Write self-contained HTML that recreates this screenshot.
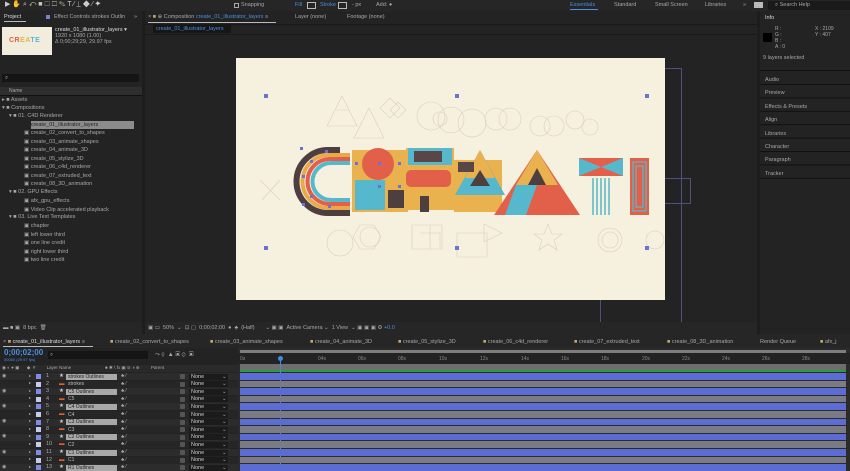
<!DOCTYPE html>
<html><head><style>
*{margin:0;padding:0;box-sizing:border-box}
body{width:850px;height:471px;background:#1d1d1d;font-family:"Liberation Sans",sans-serif;font-size:5.5px;color:#a8a8a8;position:relative;overflow:hidden}
div,span{position:absolute;white-space:nowrap}
.t{line-height:8px}
</style></head><body>
<div style="left:0;top:0;width:850px;height:11px;background:#262626"></div>
<div class="t" style="left:5px;top:1px;color:#ccc;font-size:7px">▶ ✋ ⌕ ↶ ■ ⬚ ☐ ✎ T ⁄ ⊥ ◆ ⁄ ✦</div>
<div style="left:234px;top:3px;width:5px;height:5px;border:1px solid #aaa"></div>
<div class="t" style="left:241px;top:1px">Snapping</div>
<div class="t" style="left:295px;top:1px;color:#4a8fe0">Fill</div>
<div style="left:307px;top:2px;width:9px;height:7px;border:1px solid #bbb"></div>
<div class="t" style="left:320px;top:1px;color:#4a8fe0">Stroke</div>
<div style="left:338px;top:2px;width:9px;height:7px;border:1px solid #bbb"></div>
<div class="t" style="left:352px;top:1px">- px</div>
<div class="t" style="left:376px;top:1px">Add: ●</div>
<div class="t" style="left:570px;top:1px;color:#4a8fe0">Essentials</div>
<div style="left:570px;top:9px;width:28px;height:1px;background:#4a8fe0"></div>
<div class="t" style="left:614px;top:1px">Standard</div>
<div class="t" style="left:655px;top:1px">Small Screen</div>
<div class="t" style="left:705px;top:1px">Libraries</div>
<div class="t" style="left:743px;top:1px">»</div>
<div style="left:754px;top:2px;width:9px;height:6px;background:#bbb"></div>
<div style="left:768px;top:1px;width:82px;height:9px;background:#1a1a1a"></div>
<div class="t" style="left:775px;top:1px">⌕ Search Help</div>

<div style="left:0;top:11px;width:142px;height:311px;background:#232323"></div>
<div class="t" style="left:4px;top:13px;color:#ddd">Project</div>
<div style="left:4px;top:21px;width:22px;height:1px;background:#bbb"></div>
<div style="left:46px;top:15px;width:4px;height:4px;background:#7a80d0"></div>
<div class="t" style="left:54px;top:13px">Effect Controls strokes Outlin</div>
<div class="t" style="left:134px;top:13px">»</div>
<div style="left:2px;top:27px;width:50px;height:28px;background:#f2ecdc"></div>
<div class="t" style="left:9px;top:37px;font-size:7px;font-weight:bold;color:#e06045;letter-spacing:0.5px">CR<span style="position:static;color:#e9b24f">EA</span><span style="position:static;color:#55b8cc">TE</span></div>
<div class="t" style="left:55px;top:26px;color:#ddd">create_01_illustrator_layers ▾</div>
<div class="t" style="left:55px;top:32px">1920 x 1080 (1.00)</div>
<div class="t" style="left:55px;top:38px">Δ 0;00;29;29, 29.97 fps</div>
<div style="left:2px;top:74px;width:137px;height:8px;background:#151515"></div>
<div class="t" style="left:5px;top:74px">⌕</div>
<div style="left:0;top:87px;width:142px;height:8px;background:#2e2e2e"></div>
<div class="t" style="left:9px;top:87px;font-size:5px">Name</div>
<div style="left:0;top:95px;width:142px;height:1px;background:#111"></div>
<div class="t" style="left:2px;top:96px">▸ ■ Assets</div>
<div class="t" style="left:2px;top:104px">▾ ■ Compositions</div>
<div class="t" style="left:9px;top:112px">▾ ■ 01. C4D Renderer</div>
<div style="left:31px;top:121px;width:103px;height:8px;background:#8c8c8c"></div>
<div class="t" style="left:24px;top:121px;color:#222">▣ create_01_illustrator_layers</div>
<div class="t" style="left:24px;top:129px;line-height:8.5px">▣ create_02_convert_to_shapes<br>▣ create_03_animate_shapes<br>▣ create_04_animate_3D<br>▣ create_05_stylize_3D<br>▣ create_06_c4d_renderer<br>▣ create_07_extruded_text<br>▣ create_08_3D_animation</div>
<div class="t" style="left:9px;top:188px">▾ ■ 02. GPU Effects</div>
<div class="t" style="left:24px;top:197px;line-height:8.5px">▣ afx_gpu_effects<br>▣ Video Clip accelerated playback</div>
<div class="t" style="left:9px;top:213px">▾ ■ 03. Live Text Templates</div>
<div class="t" style="left:24px;top:222px;line-height:8.5px">▣ chapter<br>▣ left lower third<br>▣ one line credit<br>▣ right lower third<br>▣ two line credit</div>
<div style="left:0;top:322px;width:142px;height:12px;background:#262626"></div>
<div class="t" style="left:3px;top:324px">▬ ■ ▣ &nbsp;8 bpc &nbsp;🗑</div>

<div style="left:145px;top:11px;width:612px;height:311px;background:#232323"></div>
<div class="t" style="left:148px;top:13px">× <span style="position:static;color:#c9a36a">■</span> ⊕ Composition <span style="position:static;color:#4a8fe0">create_01_illustrator_layers</span> ≡</div>
<div style="left:148px;top:22px;width:128px;height:1px;background:#bbb"></div>
<div class="t" style="left:295px;top:13px">Layer (none)</div>
<div class="t" style="left:347px;top:13px">Footage (none)</div>
<div style="left:145px;top:24px;width:612px;height:1px;background:#191919"></div>
<div style="left:153px;top:25px;width:78px;height:8px;background:#161616"></div>
<div class="t" style="left:156px;top:25px;color:#4a8fe0">create_01_illustrator_layers</div>
<div style="left:145px;top:34px;width:612px;height:1px;background:#191919"></div>
<div style="left:600px;top:68px;width:82px;height:256px;border:1px solid #4f4f80"></div>
<div style="left:655px;top:178px;width:36px;height:26px;border:1px solid #4f4f80"></div>
<div style="left:236px;top:58px;width:429px;height:242px;background:#f6f0df"></div>
<svg style="position:absolute;left:0;top:0" width="850" height="471">
<g fill="none" stroke="#d9d0bd" stroke-width="0.6">
<path d="M342 96 L357 126 L327 126Z M336 110 L348 110"/><path d="M369 108 L384 138 L354 138Z"/>
<path d="M380 108 l10 -10 l10 10 l-10 10z M390 110 l8 -8 l8 8 l-8 8z"/>
<circle cx="431" cy="116" r="14"/><circle cx="440" cy="119" r="7"/><circle cx="451" cy="120" r="13"/>
<circle cx="472" cy="123" r="14"/><circle cx="496" cy="119" r="11"/><circle cx="510" cy="119" r="11"/>
<circle cx="540" cy="126" r="10"/><circle cx="554" cy="126" r="10"/><circle cx="575" cy="120" r="9"/><circle cx="590" cy="127" r="8"/>
<path d="M260 180 l20 20 M262 200 l18 -20"/>
<circle cx="340" cy="243" r="13"/><circle cx="370" cy="237" r="10"/><path d="M360 225 l14 0 l7 12 l-7 12 l-14 0 l-7 -12z"/>
<path d="M412 225 h30 v24 h-30z M420 233 h20 v16 M430 225 v24"/><path d="M457 233 h30 v24 h-30z"/>
<path d="M484 224 l18 9 l-18 9z"/><path d="M548 224 l4 10 l10 0 l-8 6 l3 10 l-9 -6 l-9 6 l3 -10 l-8 -6 l10 0z"/>
<circle cx="610" cy="240" r="12"/><circle cx="610" cy="240" r="8"/><circle cx="655" cy="240" r="9"/>
</g>
<g fill="none">
<path d="M340 150 H328 A30 30 0 0 0 328 213 H350" stroke="#4d3f3f" stroke-width="6"/>
<path d="M350 155 H329 A25 25 0 0 0 329 208 H350" stroke="#e9a94a" stroke-width="4"/>
<path d="M350 159 H330 A21 21 0 0 0 330 204 H350" stroke="#e2604a" stroke-width="4"/>
<path d="M350 163 H331 A17 17 0 0 0 331 200 H350" stroke="#55b8cc" stroke-width="4"/>
</g>
<rect x="352" y="150" width="56" height="62" fill="#e9b24f"/>
<circle cx="378" cy="164" r="16" fill="#e2604a"/>
<rect x="355" y="180" width="30" height="30" fill="#55b8cc"/><rect x="388" y="190" width="16" height="18" fill="#4d3f3f"/>
<rect x="406" y="148" width="48" height="62" fill="#e9b24f"/>
<rect x="408" y="148" width="44" height="17" fill="#55b8cc"/><rect x="414" y="151" width="28" height="11" fill="#5a4646"/>
<rect x="406" y="170" width="45" height="17" fill="#e2604a" rx="5"/><rect x="420" y="196" width="9" height="16" fill="#4d3f3f"/>
<rect x="454" y="160" width="48" height="52" fill="#e9b24f"/>
<polygon points="480,150 505,195 455,195" fill="#55b8cc"/><polygon points="480,150 495,178 465,178" fill="#e9b24f"/>
<polygon points="480,170 490,186 470,186" fill="#4d3f3f"/><rect x="458" y="162" width="16" height="10" fill="#5a4646"/>
<polygon points="537,150 580,215 494,215" fill="#e2604a"/>
<polygon points="537,150 558,185 516,185" fill="#e9b24f"/><polygon points="516,185 537,185 526,215 505,215" fill="#55b8cc"/>
<polygon points="537,168 546,185 528,185" fill="#4d3f3f"/>
<rect x="579" y="158" width="44" height="18" fill="#e2604a"/>
<polygon points="579,158 601,167 579,176" fill="#55b8cc"/><polygon points="623,158 601,167 623,176" fill="#55b8cc"/>
<g stroke="#55b8cc" stroke-width="1.5"><path d="M593 178v37M597 178v37M601 178v37M605 178v37M609 178v37"/></g>
<rect x="630" y="158" width="19" height="57" fill="#e2604a"/>
<g stroke="#55b8cc" stroke-width="1.3" fill="none"><path d="M633 162h13v49h-13zM636 166h7v41h-7z"/></g>
<g fill="#6a72d6">
<rect x="264" y="94" width="4" height="4"/><rect x="455" y="94" width="4" height="4"/><rect x="645" y="94" width="4" height="4"/>
<rect x="264" y="246" width="4" height="4"/><rect x="455" y="246" width="4" height="4"/><rect x="645" y="246" width="4" height="4"/>
<rect x="300" y="147" width="3" height="3"/><rect x="310" y="160" width="3" height="3"/><rect x="302" y="175" width="3" height="3"/><rect x="310" y="195" width="3" height="3"/><rect x="302" y="203" width="3" height="3"/><rect x="325" y="150" width="3" height="3"/><rect x="328" y="205" width="3" height="3"/><rect x="355" y="162" width="3" height="3"/><rect x="378" y="162" width="3" height="3"/><rect x="398" y="162" width="3" height="3"/><rect x="378" y="185" width="3" height="3"/><rect x="398" y="185" width="3" height="3"/>
</g>
</svg>
<div style="left:145px;top:322px;width:612px;height:12px;background:#262626"></div>
<div class="t" style="left:148px;top:324px">▣ ▭ &nbsp;50% &nbsp;⌄ &nbsp;⊡ ▢ &nbsp;0;00;02;00 &nbsp;● &nbsp;♣ &nbsp;(Half) &nbsp;&nbsp;&nbsp;&nbsp;&nbsp;&nbsp;⌄ ▣ ▣ &nbsp;Active Camera ⌄ &nbsp;1 View &nbsp;⌄ ▣ ▣ ▣ ⚙ <span style="position:static;color:#4a8fe0">+0.0</span></div>

<div style="left:760px;top:11px;width:90px;height:323px;background:#232323"></div>
<div class="t" style="left:765px;top:14px;color:#ddd">Info</div>
<div style="left:763px;top:33px;width:9px;height:9px;background:#000"></div>
<div class="t" style="left:775px;top:26px;line-height:6px;font-size:5px">R :<br>G :<br>B :<br>A : 0</div>
<div class="t" style="left:815px;top:26px;line-height:6px;font-size:5px">X : 2109<br>Y : 407</div>
<div class="t" style="left:763px;top:54px">9 layers selected</div>
<div style="left:760px;top:70px;width:90px;height:1px;background:#111"></div>
<div class="t" style="left:765px;top:74px;line-height:13.4px">Audio<br>Preview<br>Effects &amp; Presets<br>Align<br>Libraries<br>Character<br>Paragraph<br>Tracker</div>
<div style="left:760px;top:84px;width:90px;height:1px;background:#111;box-shadow:0 13.4px #111,0 26.8px #111,0 40.2px #111,0 53.6px #111,0 67px #111,0 80.4px #111,0 93.8px #111"></div>

<div style="left:0;top:334px;width:850px;height:14px;background:#262626"></div>
<div class="t" style="left:3px;top:338px">× <span style="position:static;color:#c9a36a">■</span> <span style="position:static;color:#ddd">create_01_illustrator_layers</span> ≡</div>
<div style="left:3px;top:346px;width:90px;height:1px;background:#bbb"></div>
<div class="t" style="left:110px;top:338px"><span style="position:static;color:#c9a36a">■</span> create_02_convert_to_shapes</div>
<div class="t" style="left:210px;top:338px"><span style="position:static;color:#c9a36a">■</span> create_03_animate_shapes</div>
<div class="t" style="left:310px;top:338px"><span style="position:static;color:#c9a36a">■</span> create_04_animate_3D</div>
<div class="t" style="left:398px;top:338px"><span style="position:static;color:#c9a36a">■</span> create_05_stylize_3D</div>
<div class="t" style="left:483px;top:338px"><span style="position:static;color:#c9a36a">■</span> create_06_c4d_renderer</div>
<div class="t" style="left:574px;top:338px"><span style="position:static;color:#c9a36a">■</span> create_07_extruded_text</div>
<div class="t" style="left:667px;top:338px"><span style="position:static;color:#c9a36a">■</span> create_08_3D_animation</div>
<div class="t" style="left:760px;top:338px">Render Queue</div>
<div class="t" style="left:820px;top:338px"><span style="position:static;color:#c9a36a">■</span> afx_j</div>

<div style="left:0;top:348px;width:238px;height:123px;background:#232323"></div>
<div class="t" style="left:4px;top:349px;font-size:8px;color:#4a8fe0;font-weight:bold">0;00;02;00</div>
<div class="t" style="left:4px;top:356px;font-size:4px;color:#4a8fe0">00060 (29.97 fps)</div>
<div style="left:48px;top:351px;width:100px;height:8px;background:#151515"></div>
<div class="t" style="left:50px;top:351px">⌕</div>
<div class="t" style="left:155px;top:351px;font-size:6px">⤳ ⚲ &nbsp;▲ ▣ ⊘ &nbsp;▣</div>
<div style="left:0;top:365px;width:238px;height:7px;background:#2a2a2a"></div>
<div class="t" style="left:2px;top:364px;font-size:4.5px">◉ ◐ ● ▣ &nbsp;&nbsp;&nbsp;&nbsp; ◆ &nbsp;# &nbsp;&nbsp;&nbsp;&nbsp;&nbsp;&nbsp;&nbsp; Layer Name &nbsp;&nbsp;&nbsp;&nbsp;&nbsp;&nbsp;&nbsp;&nbsp;&nbsp;&nbsp;&nbsp;&nbsp;&nbsp;&nbsp;&nbsp;&nbsp;&nbsp;&nbsp;&nbsp;&nbsp;&nbsp;&nbsp;&nbsp;&nbsp;&nbsp; ♣ ✱ \ fx ▣ ⊘ ◑ ⊕ &nbsp;&nbsp;&nbsp;&nbsp;&nbsp;&nbsp;&nbsp; Parent</div>

<div style="left:238px;top:348px;width:612px;height:123px;background:#2b2b2b"></div>
<div style="left:240px;top:350px;width:606px;height:3px;background:#7d7d7d"></div>
<div style="left:238px;top:353px;width:612px;height:11px;background:#232323"></div>
<div class="t" style="left:240px;top:355px;font-size:5px;color:#888">0s</div>
<div class="t" style="left:318px;top:355px;font-size:5px;color:#888">04s</div>
<div class="t" style="left:358px;top:355px;font-size:5px;color:#888">06s</div>
<div class="t" style="left:398px;top:355px;font-size:5px;color:#888">08s</div>
<div class="t" style="left:439px;top:355px;font-size:5px;color:#888">10s</div>
<div class="t" style="left:480px;top:355px;font-size:5px;color:#888">12s</div>
<div class="t" style="left:521px;top:355px;font-size:5px;color:#888">14s</div>
<div class="t" style="left:561px;top:355px;font-size:5px;color:#888">16s</div>
<div class="t" style="left:601px;top:355px;font-size:5px;color:#888">18s</div>
<div class="t" style="left:642px;top:355px;font-size:5px;color:#888">20s</div>
<div class="t" style="left:682px;top:355px;font-size:5px;color:#888">22s</div>
<div class="t" style="left:722px;top:355px;font-size:5px;color:#888">24s</div>
<div class="t" style="left:762px;top:355px;font-size:5px;color:#888">26s</div>
<div class="t" style="left:802px;top:355px;font-size:5px;color:#888">28s</div>
<div style="left:240px;top:364px;width:606px;height:6px;background:#6e6e6e"></div>
<div style="left:240px;top:370px;width:606px;height:2px;background:#2d9a3e"></div>
<div style="left:278px;top:356px;width:5px;height:5px;border-radius:50%;background:#3d8ee0"></div>
<div style="left:280px;top:360px;width:1px;height:111px;background:#3d8ee0"></div>

<div id="rows"></div>
<script>
var names=["strokes Outlines","strokes","C5 Outlines","C5","C4 Outlines","C4","C3 Outlines","C3","C2 Outlines","C2","C1 Outlines","C1","R1 Outlines"];
var h="";
for(var i=0;i<13;i++){
 var y=373+i*7.6, o=i%2==0;
 h+='<div style="left:0;top:'+y+'px;width:238px;height:7px;background:'+(o?'#2c2c2c':'#262626')+'"></div>';
 h+='<div style="left:240px;top:'+y+'px;width:606px;height:6.6px;background:'+(o?'#5b6cd4':'#7b7b86')+'"></div>';
 if(o) h+='<div class="t" style="left:2px;top:'+(y-1.5)+'px;font-size:5px">◉</div>';
 h+='<div class="t" style="left:29px;top:'+(y-1.5)+'px;font-size:4px">▸</div>';
 h+='<div style="left:36px;top:'+(y+1)+'px;width:5px;height:5px;background:'+(o?'#7d8ae6':'#c9c9e8')+'"></div>';
 h+='<div class="t" style="left:46px;top:'+(y-1)+'px">'+(i+1)+'</div>';
 h+='<div class="t" style="left:59px;top:'+(y-1)+'px;color:'+(o?'#ccc':'#e0602a')+'">'+(o?'★':'▬')+'</div>';
 if(o) h+='<div style="left:66px;top:'+(y+0.5)+'px;width:51px;height:6px;background:#a8a8a8"></div>';
 h+='<div style="left:68px;top:'+(y+0.5)+'px;line-height:6px;font-size:5px;color:'+(o?'#222':'#bbb')+'">'+names[i]+'</div>';
 h+='<div class="t" style="left:121px;top:'+(y-1)+'px;font-size:5px">♣ ⁄</div>';
 h+='<div style="left:180px;top:'+(y+1)+'px;width:5px;height:5px;background:#555;border-radius:1px"></div>';
 h+='<div style="left:189px;top:'+(y+0.5)+'px;width:39px;height:6px;background:#1b1b1b"></div>';
 h+='<div style="left:191px;top:'+(y+0.5)+'px;line-height:6px;color:#ccc">None</div>';
 h+='<div style="left:222px;top:'+(y+0.5)+'px;line-height:6px">⌄</div>';
}
document.getElementById("rows").outerHTML=h;
</script>
</body></html>
